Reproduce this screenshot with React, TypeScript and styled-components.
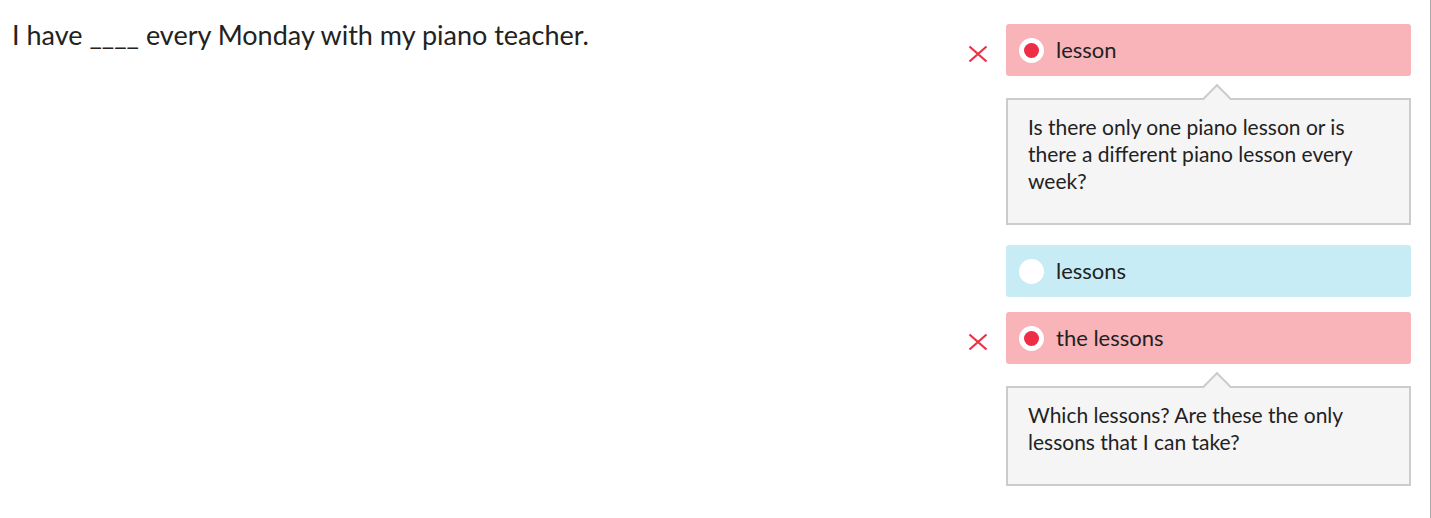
import React from "react";
import styled, { createGlobalStyle } from "styled-components";

const Global = createGlobalStyle`
  html, body { margin: 0; padding: 0; background: #fff; }
  body { font-family: Lato, "Noto Sans", sans-serif; color: #222; }
`;

const Page = styled.div`
  display: flex;
  justify-content: space-between;
  align-items: flex-start;
  box-sizing: border-box;
  width: 1431px;
  height: 518px;
  padding: 0 19px 0 12px;
  border-right: 1px solid #a8a8a8;
`;

const Question = styled.p`
  margin: 0;
  padding-top: 17px;
  font-size: 27px;
  line-height: 36px;
  color: #222;
`;

const Choices = styled.div`
  width: 443px;
  padding-top: 24px;
  display: flex;
  flex-direction: column;
`;

const Row = styled.div<{ $gap: number }>`
  display: grid;
  grid-template-columns: 38px 1fr;
  margin-top: ${(p) => p.$gap}px;
`;

const Mark = styled.div`
  display: flex;
  align-items: center;
  height: 52px;
  padding-top: 7px;
  box-sizing: border-box;
`;

const Option = styled.div<{ $wrong?: boolean }>`
  display: flex;
  align-items: center;
  gap: 12px;
  height: 52px;
  padding: 0 13px 2px;
  box-sizing: border-box;
  border-radius: 3px;
  background: ${(p) => (p.$wrong ? "#f9b4ba" : "#c8ecf6")};
  font-size: 22px;
  color: #222;
`;

const Radio = styled.span<{ $checked?: boolean }>`
  width: 25px;
  height: 25px;
  margin-top: 2px;
  border-radius: 50%;
  background: #fff;
  display: flex;
  align-items: center;
  justify-content: center;
  flex: none;
  &::after {
    content: "";
    display: ${(p) => (p.$checked ? "block" : "none")};
    width: 15px;
    height: 15px;
    border-radius: 50%;
    background: #ee2e46;
  }
`;

const Feedback = styled.div`
  grid-column: 2;
  position: relative;
  margin-top: 22px;
  border: 2px solid #cccccc;
  background: #f5f5f5;
  padding: 13px 20px 29px 20px;
  font-size: 21px;
  line-height: 27px;
  color: #222;
  &::before {
    content: "";
    position: absolute;
    top: -12px;
    left: 199px;
    width: 20px;
    height: 20px;
    background: #f5f5f5;
    border-top: 2px solid #cccccc;
    border-left: 2px solid #cccccc;
    box-sizing: border-box;
    transform: rotate(45deg);
  }
`;

const Cross = () => (
  <svg width="20" height="18" viewBox="0 0 20 18">
    <path d="M1.5 1.5 L18.5 16.5 M18.5 1.5 L1.5 16.5" stroke="#ee2e46" strokeWidth="2.2" fill="none" />
  </svg>
);

type Choice = { label: string; wrong?: boolean; feedback?: string; gap: number };

const choices: Choice[] = [
  {
    label: "lesson",
    wrong: true,
    gap: 0,
    feedback: "Is there only one piano lesson or is there a different piano lesson every week?",
  },
  { label: "lessons", gap: 20 },
  {
    label: "the lessons",
    wrong: true,
    gap: 15,
    feedback: "Which lessons? Are these the only lessons that I can take?",
  },
];

export default function App() {
  return (
    <>
      <Global />
      <Page>
        <Question>I have ____ every Monday with my piano teacher.</Question>
        <Choices>
          {choices.map((c) => (
            <Row key={c.label} $gap={c.gap}>
              <Mark>{c.wrong && <Cross />}</Mark>
              <Option $wrong={c.wrong}>
                <Radio $checked={c.wrong} />
                {c.label}
              </Option>
              {c.feedback && <Feedback>{c.feedback}</Feedback>}
            </Row>
          ))}
        </Choices>
      </Page>
    </>
  );
}
